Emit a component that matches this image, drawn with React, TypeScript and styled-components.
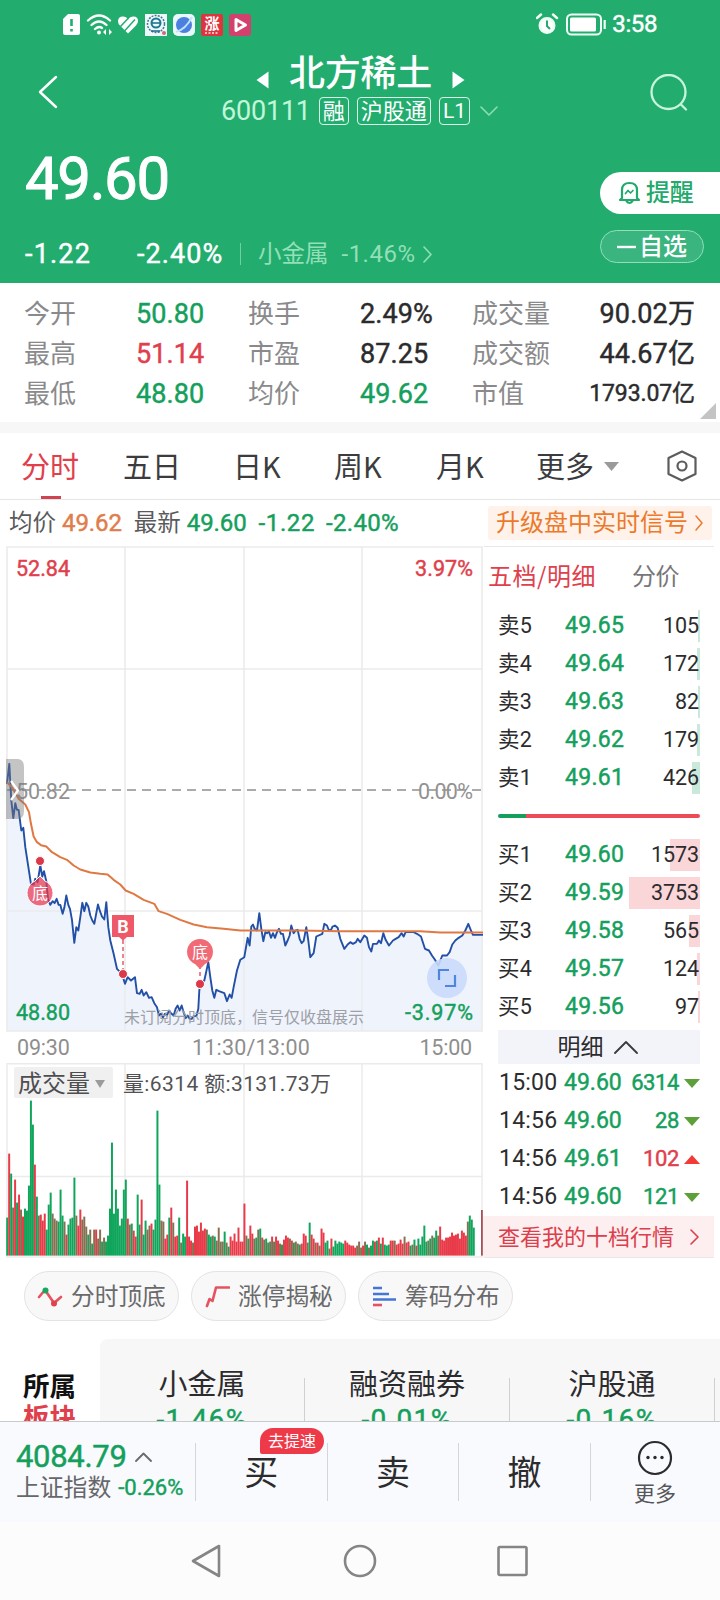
import React from 'react';
import styled, { createGlobalStyle } from 'styled-components';

const GREEN = '#14a05c';
const RED = '#e0404c';
const CJK = "'Noto Sans CJK SC', sans-serif";
const NUM = "Roboto, 'Noto Sans CJK SC', sans-serif";

const Global = createGlobalStyle`
  * { box-sizing: border-box; }
  body { margin: 0; background: #fff; font-family: ${CJK}; color: #2c2c2e; }
  svg { display: block; flex: none; }
`;

const Screen = styled.div`
  width: 720px;
  height: 1600px;
  overflow: hidden;
  display: flex;
  flex-direction: column;
  background: #fff;
`;

const Text = styled.span<{ $s: number; $c?: string; $w?: number; $ls?: number }>`
  font-size: ${p => p.$s}px;
  line-height: 1.2;
  margin-bottom: 3px;
  color: ${p => p.$c ?? 'inherit'};
  font-weight: ${p => p.$w ?? 400};
  letter-spacing: ${p => p.$ls ?? 0}px;
  white-space: nowrap;
`;

/* Figures: regular cut, slightly thickened unless a weight is set. */
const Num = styled(Text)`
  font-family: ${NUM};
  margin-bottom: 0;
  font-weight: ${p => p.$w ?? 400};
  -webkit-text-stroke: ${p => (p.$w ? 0 : 0.45)}px currentColor;
`;

/* ---------- header ---------- */
const Header = styled.header`
  height: 283px;
  background: #22ad6f;
  color: #fff;
  flex: none;
`;
const StatusBar = styled.div`
  height: 49px;
  padding: 0 63px;
  display: flex;
  align-items: center;
  justify-content: space-between;
`;
const StatusGroup = styled.div<{ $gap: number }>`
  display: flex;
  align-items: center;
  gap: ${p => p.$gap}px;
`;
const TitleBar = styled.div`
  height: 83px;
  display: flex;
  justify-content: space-between;
  padding: 0 32px 0 38px;
`;
const SideButton = styled.div`
  width: 38px;
  padding-top: 25px;
`;
const TitleBlock = styled.div`
  display: flex;
  flex-direction: column;
  align-items: center;
  padding-right: 5px;
`;
const NameRow = styled.div`
  display: flex;
  align-items: center;
  height: 46px;
  gap: 20px;
  svg { margin-top: 16px; }
`;
const CodeRow = styled.div`
  display: flex;
  align-items: center;
  height: 32px;
  gap: 8px;
  margin-right: 2px;
  > svg { margin-left: 2px; }
`;
const Tag = styled.span`
  height: 28px;
  padding: 0 3px;
  border: 1.5px solid #d8fbe8;
  border-radius: 4px;
  font-size: 22px;
  line-height: 23px;
`;
const SmallTag = styled(Tag)`
  padding: 0 3px;
  font-family: ${NUM};
  font-size: 21px;
  line-height: 26px;
`;
const QuoteBar = styled.div`
  display: flex;
  justify-content: space-between;
  height: 151px;
  padding-left: 25px;
`;
const QuoteLeft = styled.div`
  display: flex;
  flex-direction: column;
`;
const BigPrice = styled.div`
  font: 400 60px/72px ${NUM};
  -webkit-text-stroke: 1px currentColor;
  letter-spacing: -1.4px;
  margin-top: 11px;
`;
const ChangeRow = styled.div`
  display: flex;
  align-items: center;
  height: 34px;
  margin-top: 22px;
`;
const Change = styled(Num)<{ $width: number }>`
  width: ${p => p.$width}px;
`;
const Divider = styled.i<{ $h: number; $c: string }>`
  width: 1px;
  height: ${p => p.$h}px;
  background: ${p => p.$c};
  flex: none;
`;
const SectorLink = styled.div`
  display: flex;
  align-items: center;
  margin-left: 17px;
  color: #93dfb8;
`;
const QuoteActions = styled.div`
  width: 120px;
  padding-top: 40px;
`;
const RemindButton = styled.div`
  height: 42px;
  border-radius: 21px 0 0 21px;
  background: #fff;
  color: #22a96b;
  display: flex;
  align-items: center;
  gap: 5px;
  padding-left: 18px;
`;
const FavButton = styled.div`
  width: 104px;
  height: 33px;
  margin-top: 16px;
  border: 1px solid #8fe0b7;
  border-radius: 17px;
  background: #3ab57f;
  display: flex;
  align-items: center;
  gap: 3px;
  padding-left: 16px;
`;

/* ---------- stats ---------- */
const Stats = styled.section`
  height: 139px;
  padding: 10px 25px 9px 24px;
  display: grid;
  grid-template-columns: 112px 112px 112px 112px 100px 123px;
  grid-template-rows: repeat(3, 40px);
  align-items: center;
  position: relative;
`;
const StatValue = styled.div<{ $c?: string; $right?: boolean; $small?: boolean }>`
  font: 400 ${p => (p.$small ? 23 : 27)}px/32px ${NUM};
  -webkit-text-stroke: 0.45px currentColor;
  letter-spacing: ${p => (p.$small ? -0.1 : 0.1)}px;
  color: ${p => p.$c ?? '#2b2b2d'};
  text-align: ${p => (p.$right ? 'right' : 'left')};
  white-space: nowrap;
  margin-top: 2px;
`;
const FoldCorner = styled.svg`
  position: absolute;
  right: 4px;
  bottom: 3px;
`;
const Band = styled.div`
  height: 11px;
  background: #f7f7f7;
  flex: none;
`;

/* ---------- period tabs ---------- */
const Tabs = styled.nav`
  height: 67px;
  padding: 0 23px 0 21px;
  border-bottom: 1px solid #e6e6e6;
  display: grid;
  grid-template-columns: 102px 110px 101px 102px 100px 131px 30px;
  align-items: center;
`;
const Tab = styled.div<{ $active?: boolean }>`
  height: 66px;
  display: flex;
  align-items: center;
  gap: 10px;
  font-size: 29px;
  color: ${p => (p.$active ? RED : '#3c3c3e')};
  position: relative;
  padding-bottom: 3px;
  > svg { margin-top: 3px; }
  &::after {
    content: ${p => (p.$active ? "''" : 'none')};
    position: absolute;
    left: 20px;
    bottom: 0;
    width: 20px;
    height: 3px;
    background: #cf4450;
  }
`;

const InfoBar = styled.div`
  height: 46px;
  padding: 0 8px 0 9px;
  display: flex;
  align-items: center;
  justify-content: space-between;
`;
const InfoLeft = styled.div`
  display: flex;
  align-items: center;
`;
const Gap = styled.i<{ $w: number }>`
  width: ${p => p.$w}px;
`;
const SignalButton = styled.div`
  width: 224px;
  height: 34px;
  background: #fef2ea;
  color: #ec7a2c;
  border-radius: 3px;
  display: flex;
  align-items: center;
  gap: 6px;
  padding-left: 8px;
`;

/* ---------- main ---------- */
const Main = styled.section`
  display: flex;
  height: 712px;
  flex: none;
`;
const Charts = styled.div`
  width: 484px;
`;
const Book = styled.aside`
  width: 230px;
  border-top: 1px solid #e8e8e8;
  border-bottom: 1px solid #e8e8e8;
`;
const BookTabs = styled.div`
  height: 60px;
  padding-left: 4px;
  display: flex;
  align-items: center;
  gap: 36px;
`;
const Level = styled.div`
  height: 38px;
  padding: 0 14px 0 14px;
  display: grid;
  grid-template-columns: 67px 64px 71px;
  align-items: center;
`;
const Qty = styled.div<{ $bar: number; $c: string }>`
  height: 32px;
  font: 400 21.5px/32px ${NUM};
  letter-spacing: -0.1px;
  text-align: right;
  padding-right: 1px;
  background: linear-gradient(${p => p.$c}, ${p => p.$c}) right / ${p => p.$bar}px 32px no-repeat;
`;
const Ratio = styled.div`
  display: flex;
  height: 4px;
  margin: 17px 14px 18px;
  border-radius: 2px;
  overflow: hidden;
  background: linear-gradient(90deg, #14a05c 28px, #ee4b59 28px);
`;
const DetailHead = styled.div`
  height: 34px;
  margin: 4px 14px 0;
  background: #f3f4f9;
  display: flex;
  align-items: center;
  justify-content: center;
  gap: 10px;
  padding-right: 3px;
`;
const Trade = styled.div`
  height: 38px;
  padding-left: 15px;
  display: grid;
  grid-template-columns: 65px 59px 56px 21px;
  align-items: center;
  justify-items: start;
  > :nth-child(3) { justify-self: end; }
  > :nth-child(4) { justify-self: end; }
`;
const DepthLink = styled.div`
  height: 41px;
  margin-left: -1px;
  background: #fdeef0;
  color: #dc3f4c;
  display: flex;
  align-items: center;
  justify-content: space-between;
  padding: 0 15px 0 15px;
`;

/* ---------- pills ---------- */
const Pills = styled.div`
  display: flex;
  gap: 12px;
  padding: 13px 24px 18px;
  flex: none;
`;
const Pill = styled.div`
  width: 155px;
  height: 50px;
  border: 1px solid #e3e3e3;
  border-radius: 25px;
  background: #f8f8f8;
  display: flex;
  align-items: center;
  gap: 8px;
  padding: 1px 0 0 12px;
`;

/* ---------- boards ---------- */
const Boards = styled.section`
  height: 82px;
  display: flex;
  overflow: hidden;
  flex: none;
`;
const BoardLabel = styled.div`
  width: 100px;
  padding: 30px 0 0 23px;
  font-weight: 700;
  font-size: 26.5px;
  line-height: 31px;
  color: #111;
  flex: none;
  em { font-style: normal; color: ${RED}; display: block; }
`;
const BoardList = styled.div`
  flex: 1;
  display: flex;
  background: #f7f7f7;
  border-radius: 8px 0 0 0;
`;
const Board = styled.div`
  width: 205px;
  flex: none;
  display: flex;
  flex-direction: column;
  align-items: center;
  padding: 25px 1px 0 0;
  font-size: 29px;
  line-height: 36px;
  background: linear-gradient(#d0d0d0, #d0d0d0) right 39px / 1px 50px no-repeat;
`;
const BoardPct = styled.div`
  font: 400 28px/34px ${NUM};
  -webkit-text-stroke: 0.45px currentColor;
  letter-spacing: 1.4px;
  color: ${GREEN};
  margin-top: 3px;
`;

/* ---------- bottom ---------- */
const TradeBar = styled.footer`
  height: 101px;
  border-top: 1px solid #c9cacc;
  background: #f9fafd;
  display: flex;
  align-items: flex-start;
  padding-top: 21px;
  flex: none;
`;
const IndexBox = styled.div`
  width: 195px;
  padding-left: 16px;
`;
const IndexRow = styled.div<{ $h: number; $gap: number }>`
  display: flex;
  align-items: center;
  gap: ${p => p.$gap}px;
  height: ${p => p.$h}px;
`;
const Action = styled.div`
  width: 131.600px;
  height: 58px;
  border-left: 1px solid #d5d6da;
  display: flex;
  align-items: center;
  justify-content: center;
  font-size: 34px;
  padding-bottom: 3px;
  position: relative;
`;
const Badge = styled.span`
  position: absolute;
  left: 64px;
  top: -15px;
  width: 64px;
  height: 26px;
  border-radius: 13px 13px 13px 2px;
  background: #ee3a48;
  color: #fff;
  font-size: 16px;
  line-height: 24px;
  text-align: center;
`;
const More = styled.div`
  flex: 1;
  height: 58px;
  border-left: 1px solid #d5d6da;
  display: flex;
  flex-direction: column;
  align-items: center;
  gap: 4px;
  padding-right: 1px;
  > svg { margin-top: -3px; }
`;
const NavBar = styled.div`
  flex: 1;
  background: #fcfcfc;
  display: flex;
  justify-content: center;
  align-items: center;
  gap: 120px;
`;

type ChevronProps = { d: string; w: number; h: number; c?: string; s?: number };
const Stroke = ({ d, w, h, c = 'currentColor', s = 1.6 }: ChevronProps) => (
  <svg width={w} height={h} fill="none" stroke={c} strokeWidth={s} strokeLinecap="round" strokeLinejoin="round">
    <path d={d} />
  </svg>
);

/* Intraday price samples, in thirds of a pixel from (0, 750). */
const PRICE_AM = '20,100 27,40 33,150 39,203 45,158 50,178 55,178 63,240 69,232 75,290 92,400 100,402 105,385 112,395 120,345 126,378 131,362 138,392 143,445 150,463 157,452 163,458 169,445 175,463 180,463 187,490 192,472 198,435 204,463 209,475 215,508 222,577 228,530 234,540 240,500 246,457 252,482 258,457 264,468 270,495 276,510 282,520 288,488 293,462 299,482 305,498 312,507 318,455 324,530 330,570 340,610 350,655 360,665 368,680 374,700 382,680 392,690 404,680 410,728 418,730 424,718 430,735 438,725 446,742 454,740 462,758 470,770 476,795 482,790 488,800 494,790 500,795 506,780 512,788 520,795 526,775 532,765 538,780 544,765 550,785 556,803 562,795 568,805 574,805 580,797 588,797 594,775 597,720 600,700 612,690 624,635 630,680 636,720 642,742 648,718 656,722 672,728 680,752 688,732 694,742 700,710 710,660 720,628';
const PRICE_PM = '732,620 742,562 748,585 753,528 758,522 763,535 770,540 777,488 783,535 789,572 795,545 800,548 806,543 812,562 818,548 824,562 830,545 836,535 842,550 848,550 855,585 862,570 868,555 873,525 880,548 886,540 892,538 898,565 904,578 910,572 918,530 924,570 930,620 940,608 948,558 966,550 972,520 980,525 986,540 992,538 997,528 1004,525 1012,532 1020,565 1032,595 1042,582 1050,575 1058,580 1067,575 1072,565 1080,575 1092,555 1100,562 1106,590 1113,603 1118,580 1130,580 1136,570 1142,578 1149,548 1156,568 1166,585 1178,570 1186,565 1195,560 1204,548 1210,558 1216,545 1240,545 1250,550 1262,558 1274,595 1286,600 1295,615 1304,628 1314,645 1326,615 1340,615 1348,605 1356,582 1365,570 1375,562 1386,555 1395,540 1404,520 1412,540 1418,553 1448,553';
const AVERAGE = '20,95 35,110 55,145 75,162 86,185 92,220 100,258 110,275 122,284 138,288 155,305 180,320 200,328 220,345 240,357 270,366 300,370 322,372 340,388 360,402 376,420 400,430 430,448 462,460 475,482 500,490 540,508 580,522 620,530 670,535 720,540 900,540 1020,542 1260,542 1320,546 1448,546';
const toPoints = (s: string) =>
  s.split(' ').map(p => {
    const [x, y] = p.split(',').map(Number);
    return `${(x / 3 + 0.3).toFixed(2)},${(750.5 + y / 3).toFixed(2)}`;
  }).join(' ');
const price = toPoints(`${PRICE_AM} ${PRICE_PM}`);
const average = toPoints(AVERAGE);

/* Per-minute volume: bar height followed by r(ise), g(fall) or m(ixed). */
const VOLUME = '38g 102r 82g 48m 76r 53g 61r 46m 39r 47g 45g 70g 155g 131g 91r 59g 40m 41r 35r 42r 26g 51g 63g 42m 37m 35m 34g 66g 40g 34m 21r 31g 37g 38g 78g 40m 30r 46r 36m 39m 29m 21g 26m 12g 26m 26r 17m 26m 14g 18m 14g 20g 47g 113g 42g 66g 47g 30g 37g 66g 76g 37r 31m 32g 25r 19r 61g 31g 56r 21g 35g 26m 30m 32r 26g 36g 145g 71g 35m 34m 17r 21r 38g 48r 33m 19r 20r 38g 13m 22g 19g 75r 19r 15r 13m 29r 30r 24r 33r 25r 27r 26m 21g 19g 20m 19g 15m 28m 14m 14m 24g 13m 9g 19r 15r 22r 14r 28r 14r 14r 52r 20m 17g 30r 22r 17m 18g 26m 27g 18r 16m 17g 13m 14g 19r 14g 19r 15r 12m 11g 16r 20r 18r 17m 15r 13g 14m 12m 11g 12r 22r 20r 13m 33g 21r 17r 13m 13r 10m 27r 23r 13g 15g 7m 17r 9g 15g 12g 14g 13g 12g 15r 13r 11r 10r 10r 8r 10m 14m 8m 10r 14m 11g 8m 10g 15g 14r 15g 18r 12g 18r 11g 10g 11g 15r 15r 15m 11r 12r 16r 12r 19m 13r 14r 10g 11m 16g 10r 17g 11g 19g 30g 14g 15m 17g 20m 18g 25g 20m 29r 16r 15r 18r 18r 19r 23r 20r 21r 22r 17r 25r 23r 20r 34m 40g 36g 28g'
  .split(' ').map(v => ({ h: parseInt(v, 10), c: v.slice(-1) }));
const VOL_COLORS: Record<string, string> = { r: '#e83a48', g: '#0fa55a', m: '#867052' };

const TrendChart = () => (
  <svg width="484" height="486" viewBox="0 546 484 486" fontFamily={NUM}>
    <polygon points={`${price} 482,1031 7,1031`} fill="#eff3fc" />
    <g stroke="#ebebed" strokeWidth="1.6" fill="none">
      <path d="M7 547H482V1031H7ZM125 547V1031M244 547V1031M362 547V1031M7 669H482M7 911H482" />
    </g>
    <path d="M7 790H482" stroke="#909090" strokeWidth="1.6" strokeDasharray="9 6" />
    <g fontSize="21.5" stroke={RED} strokeWidth=".45">
      <text x="16" y="576" fill={RED} textLength="54">52.84</text>
      <text x="415" y="576" fill={RED} textLength="58">3.97%</text>
    </g>
    <g fontSize="21.5" fill="#929292">
      <text x="16" y="798.500" textLength="54">50.82</text>
      <text x="418" y="798.500" textLength="55">0.00%</text>
    </g>
    <polyline points={price} fill="none" stroke="#2250a6" strokeWidth="1.900" strokeLinejoin="round" />
    <polyline points={average} fill="none" stroke="#df7843" strokeWidth="2" strokeLinejoin="round" />
    <text x="124" y="1023" fontSize="16" fontFamily={CJK} fill="#9da0a6" textLength="240">未订阅分时顶底，信号仅收盘展示</text>
    <g fontSize="21.5" fill={GREEN} stroke={GREEN} strokeWidth=".45">
      <text x="16" y="1020" textLength="54">48.80</text>
      <text x="405" y="1020" textLength="68">-3.97%</text>
    </g>
    <path d="M6 759H17Q24 759 24 767V811Q24 819 17 819H6Z" fill="#777" fillOpacity=".43" />
    <path d="M11 781L18 790.500L11 800" stroke="#fff" strokeWidth="2.200" fill="none" />
    <g stroke="#fff" strokeWidth="1">
      <path d="M35 881L40 876L45 881A13 13 0 1 1 35 881Z" fill="#e8364f" fillOpacity=".72" />
      <circle cx="40" cy="861" r="4.500" fill="#dd3748" />
    </g>
    <path d="M123 940V970M200 965V980" stroke="#e66673" strokeWidth="1.6" strokeDasharray="4 3" />
    <path d="M112 915H134V937H127L123 940.500L119 937H112Z" fill="#ee5869" />
    <path d="M195 964L200 969L205 964A13 13 0 1 0 195 964Z" fill="#f06b76" />
    <g fill="#dd3748" stroke="#fff" strokeWidth="1">
      <circle cx="123" cy="974" r="4.500" />
      <circle cx="200" cy="984" r="4.500" />
    </g>
    <g fill="#fff" textAnchor="middle">
      <text x="40" y="899" fontSize="16" fontFamily={CJK}>底</text>
      <text x="200" y="958" fontSize="16" fontFamily={CJK}>底</text>
      <text x="123" y="932.500" fontSize="18" fontWeight="700">B</text>
    </g>
    <circle cx="447" cy="978" r="20" fill="#c9dafb" fillOpacity=".9" />
    <path d="M439 980V970H449M455 975V986H445" stroke="#4e86dd" strokeWidth="2.200" fill="none" />
  </svg>
);

const TimeAxis = styled.div`
  height: 31px;
  padding: 1px 12px 0 17px;
  display: flex;
  align-items: center;
  justify-content: space-between;
  font: 400 21.5px/28px ${NUM};
  letter-spacing: -0.2px;
  color: #8e8e8e;
`;
const NoonLabel = styled.span`
  margin-left: 13px;
  letter-spacing: 0.2px;
`;

const VolumeChart = () => (
  <svg width="484" height="195" viewBox="0 1063 484 195">
    <path d="M7 1063.800H482V1257H7ZM125 1063V1257M244 1063V1257M362 1063V1257M7 1176.500H482" stroke="#ebebed" strokeWidth="1.500" fill="none" />
    <rect x="14" y="1067" width="99" height="31" rx="2" fill="#f0f0f0" />
    <text x="18" y="1091.500" fontSize="24" fontFamily={CJK} fill="#4e4e50">成交量</text>
    <path d="M95 1080H105L100 1088Z" fill="#9b9b9b" />
    <text x="123" y="1091" fontSize="21" fontFamily={NUM} fill="#525254" textLength="208">量:6314 额:3131.73万</text>
    {VOLUME.map((v, i) => (
      <rect key={i} x={6.2 + i * 1.977} y={1255.6 - v.h} width="1.977" height={v.h} fill={VOL_COLORS[v.c]} />
    ))}
    <rect x="481" y="1210" width="1.800" height="45.600" fill="#a94f58" />
  </svg>
);

const asks: [string, string, string, number][] = [
  ['卖5', '49.65', '105', 2], ['卖4', '49.64', '172', 3], ['卖3', '49.63', '82', 2],
  ['卖2', '49.62', '179', 3], ['卖1', '49.61', '426', 8],
];
const bids: [string, string, string, number][] = [
  ['买1', '49.60', '1573', 30], ['买2', '49.59', '3753', 71], ['买3', '49.58', '565', 11],
  ['买4', '49.57', '124', 3], ['买5', '49.56', '97', 2],
];
const trades: [string, string, string, boolean][] = [
  ['15:00', '49.60', '6314', false], ['14:56', '49.60', '28', false],
  ['14:56', '49.61', '102', true], ['14:56', '49.60', '121', false],
];

const Levels = ({ rows, color }: { rows: typeof asks; color: string }) => (
  <>
    {rows.map(([name, p, q, bar]) => (
      <Level key={name}>
        <Num $s={21.5} $w={400} $ls={0.2}>{name}</Num>
        <Num $s={23} $c={GREEN} $ls={0.3}>{p}</Num>
        <Qty $bar={bar} $c={color}>{q}</Qty>
      </Level>
    ))}
  </>
);

const StatusIcons = () => (
  <svg width="190" height="24" viewBox="63 12 190 24">
    <path d="M68 13H78Q80 13 80 15V32Q80 34 78 34H65Q63 34 63 32V18Z" fill="#fff" />
    <path d="M71.500 18V25M71.500 28V30.500" stroke="#22ad6f" strokeWidth="2.600" />
    <g fill="none" stroke="#fff" strokeWidth="2.300" strokeLinecap="round">
      <path d="M88 19.500Q99 9.500 110 19.500M91.500 24Q99 17 106.500 24M95 28Q99 24.500 102 27" />
    </g>
    <circle cx="99" cy="31.500" r="2" fill="#fff" />
    <path d="M106 28L103 31L106 34ZM109 28L112 31L109 34Z" fill="#fff" />
    <path d="M118 20.500Q118 15.500 123 15.500Q126.500 15.500 128 18.500Q130 15.500 133.500 15.500Q138 15.500 138 20Q138 22.500 136 24.500L128 32.500L120 24.500Q118 22.500 118 20.500Z" fill="#fff" />
    <path d="M120.500 25.500L128.500 17M124.500 30L135 18.500" stroke="#22ad6f" strokeWidth="1.500" />
    <rect x="145" y="13" width="22" height="22" fill="#edf9fb" />
    <circle cx="156" cy="23" r="8.500" fill="none" stroke="#47718e" strokeWidth="1.500" strokeDasharray="2 1.200" />
    <circle cx="156" cy="22" r="4.500" fill="none" stroke="#1c7b94" strokeWidth="2" />
    <path d="M152 22H160M151 30H160" stroke="#1c6a92" strokeWidth="1.500" />
    <circle cx="164" cy="32" r="2" fill="#cf6a78" />
    <rect x="173" y="13" width="22" height="22" rx="5" fill="#eaf8fc" />
    <circle cx="184" cy="24" r="8" fill="#4b7fe0" />
    <path d="M176 31Q186 28 192 16" stroke="#bfe3fb" strokeWidth="1.800" fill="none" />
    <rect x="201" y="13" width="22" height="22" rx="2" fill="#dd3440" />
    <text x="212" y="28" fontSize="15" fontWeight="700" textAnchor="middle" fill="#fff" fontFamily={CJK}>涨</text>
    <path d="M205 32H219" stroke="#ffe3e3" strokeWidth="1.500" strokeDasharray="2 1.500" />
    <rect x="229" y="13" width="22" height="22" rx="3" fill="#d3406e" />
    <path d="M236 18.500L245.500 24L236 29.500Z" fill="none" stroke="#fff" strokeWidth="3" strokeLinejoin="round" />
  </svg>
);

const Battery = () => (
  <svg width="70" height="24" viewBox="536 12 70 24" fill="none" stroke="#effff6">
    <circle cx="547" cy="25.500" r="7" fill="#fff" strokeWidth="3" />
    <path d="M547 20.500V26L550 29" stroke="#22ad6f" strokeWidth="2" />
    <path d="M537 18L541 14.500M557 18L553 14.500" strokeWidth="2.500" strokeLinecap="round" />
    <rect x="567" y="14.500" width="34" height="20" rx="4.500" strokeWidth="2" />
    <rect x="570" y="17.500" width="26" height="14" rx="1.500" fill="#fff" stroke="none" />
    <path d="M604.700 20V29" strokeWidth="2.200" />
  </svg>
);

export default function App() {
  return (
    <Screen>
      <Global />
      <Header>
        <StatusBar>
          <StatusIcons />
          <StatusGroup $gap={6}>
            <Battery />
            <Num $s={24} $ls={-0.4}>3:58</Num>
          </StatusGroup>
        </StatusBar>
        <TitleBar>
          <SideButton><Stroke w={20} h={36} d="M18 3L2 18L18 33" s={2.4} /></SideButton>
          <TitleBlock>
            <NameRow>
              <svg width="13" height="18"><path d="M12.500 0.500V17.500L0.500 9Z" fill="#fff" /></svg>
              <Text $s={36} $w={500} $ls={-0.3}>北方稀土</Text>
              <svg width="13" height="18"><path d="M0.500 0.500V17.500L12.500 9Z" fill="#fff" /></svg>
            </NameRow>
            <CodeRow>
              <Num $s={27} $w={400} $c="#c0f7d8" $ls={-0.2}>600111</Num>
              <Tag>融</Tag><Tag>沪股通</Tag><SmallTag>L1</SmallTag>
              <Stroke w={18} h={12} d="M1 2L9 10L17 2" c="#8be0b2" />
            </CodeRow>
          </TitleBlock>
          <SideButton>
            <svg width="38" height="38" fill="none" stroke="#c9f3dc" strokeWidth="2.300" strokeLinecap="round">
              <circle cx="18.500" cy="18" r="17" />
              <path d="M31 30.500L36 35.500" />
            </svg>
          </SideButton>
        </TitleBar>
        <QuoteBar>
          <QuoteLeft>
            <BigPrice>49.60</BigPrice>
            <ChangeRow>
              <Change $s={27} $ls={1.2} $width={112}>-1.22</Change>
              <Change $s={27} $ls={1.1} $width={103}>-2.40%</Change>
              <Divider $h={22} $c="#6fd09f" />
              <SectorLink>
                <Text $s={23.5}>小金属</Text>
                <Gap $w={13} />
                <Num $s={24} $w={400} $ls={0.5}>-1.46%</Num>
                <Gap $w={6} />
                <Stroke w={11} h={17} d="M2 1L9 8.500L2 16" />
              </SectorLink>
            </ChangeRow>
          </QuoteLeft>
          <QuoteActions>
            <RemindButton>
              <svg width="23" height="24" fill="none" stroke="#22a96b" strokeWidth="2.200" strokeLinejoin="round" strokeLinecap="round">
                <path d="M4 17V9Q4 2 11.500 2Q19 2 19 9V17L21 19H2ZM8.500 20Q11.500 24 14.500 20" />
                <path d="M7.500 12.500L10 9.500L12.500 12L15 9.500" strokeWidth="1.700" />
              </svg>
              <Text $s={24} $w={500} $ls={-0.3}>提醒</Text>
            </RemindButton>
            <FavButton>
              <svg width="19" height="4"><path d="M0 2H19" stroke="#fff" strokeWidth="2.400" /></svg>
              <Text $s={24} $w={500}>自选</Text>
            </FavButton>
          </QuoteActions>
        </QuoteBar>
      </Header>

      <Stats>
        <Text $s={26} $c="#8a8a8c">今开</Text><StatValue $c={GREEN}>50.80</StatValue>
        <Text $s={26} $c="#8a8a8c">换手</Text><StatValue>2.49%</StatValue>
        <Text $s={26} $c="#8a8a8c">成交量</Text><StatValue $right>90.02万</StatValue>
        <Text $s={26} $c="#8a8a8c">最高</Text><StatValue $c={RED}>51.14</StatValue>
        <Text $s={26} $c="#8a8a8c">市盈</Text><StatValue>87.25</StatValue>
        <Text $s={26} $c="#8a8a8c">成交额</Text><StatValue $right>44.67亿</StatValue>
        <Text $s={26} $c="#8a8a8c">最低</Text><StatValue $c={GREEN}>48.80</StatValue>
        <Text $s={26} $c="#8a8a8c">均价</Text><StatValue $c={GREEN}>49.62</StatValue>
        <Text $s={26} $c="#8a8a8c">市值</Text><StatValue $right $small>1793.07亿</StatValue>
        <FoldCorner width="16" height="16"><path d="M16 0V16H0Z" fill="#c4c4c4" /></FoldCorner>
      </Stats>
      <Band />

      <Tabs>
        <Tab $active>分时</Tab>
        <Tab>五日</Tab>
        <Tab>日K</Tab>
        <Tab>周K</Tab>
        <Tab>月K</Tab>
        <Tab>更多<svg width="15" height="9"><path d="M0 0H15L7.500 9Z" fill="#9a9a9a" /></svg></Tab>
        <svg width="30" height="32" fill="none" stroke="#5c5c5e" strokeWidth="2.200" strokeLinejoin="round">
          <path d="M15 1.500L28.500 8V24L15 30.500L1.500 24V8Z" />
          <circle cx="15" cy="16" r="4.500" />
        </svg>
      </Tabs>

      <InfoBar>
        <InfoLeft>
          <Text $s={23.5} $c="#5a5a5c">均价</Text><Gap $w={6} />
          <Num $s={24} $c="#df7d4c" $ls={-0.1}>49.62</Num><Gap $w={12} />
          <Text $s={23.5} $c="#5a5a5c">最新</Text><Gap $w={6} />
          <Num $s={24} $c={GREEN} $ls={-0.1}>49.60</Num><Gap $w={12} />
          <Num $s={24} $c={GREEN} $ls={0.6}>-1.22</Num><Gap $w={11} />
          <Num $s={24} $c={GREEN} $ls={0.3}>-2.40%</Num>
        </InfoLeft>
        <SignalButton>
          <Text $s={24}>升级盘中实时信号</Text>
          <Stroke w={10} h={18} d="M2 2L8 9L2 16" s={1.5} />
        </SignalButton>
      </InfoBar>

      <Main>
        <Charts>
          <TrendChart />
          <TimeAxis><span>09:30</span><NoonLabel>11:30/13:00</NoonLabel><span>15:00</span></TimeAxis>
          <VolumeChart />
        </Charts>
        <Book>
          <BookTabs>
            <Text $s={24} $c={RED} $ls={0.5}>五档/明细</Text>
            <Text $s={24} $c="#77777a" $ls={-0.3}>分价</Text>
          </BookTabs>
          <Levels rows={asks} color="#c9e9da" />
          <Ratio />
          <Levels rows={bids} color="#fbd6d9" />
          <DetailHead>
            <Text $s={23}>明细</Text>
            <Stroke w={24} h={14} d="M1 13L12 2L23 13" c="#3a3a3c" s={1.8} />
          </DetailHead>
          {trades.map(([t, p, q, up], i) => (
            <Trade key={i}>
              <Num $s={23} $w={400} $ls={0.2}>{t}</Num>
              <Num $s={23} $c={GREEN}>{p}</Num>
              <Num $s={22} $c={up ? RED : GREEN} $ls={-0.4}>{q}</Num>
              <svg width="16" height="9">
                <path d={up ? 'M0 9H16L8 0Z' : 'M0 0H16L8 9Z'} fill={up ? '#f23a38' : '#5d9f38'} />
              </svg>
            </Trade>
          ))}
          <DepthLink>
            <Text $s={22}>查看我的十档行情</Text>
            <Stroke w={9} h={16} d="M1 1L8 8L1 15" />
          </DepthLink>
        </Book>
      </Main>

      <Pills>
        <Pill>
          <svg width="26" height="24" fill="none" stroke="#e5535e" strokeWidth="2.600" strokeLinecap="round">
            <path d="M2 12L8 5" /><path d="M8 5L17 18L24 12" />
            <circle cx="8.500" cy="5.500" r="3" fill="#17a860" stroke="none" />
            <circle cx="17" cy="18.500" r="3" fill="#e04350" stroke="none" />
          </svg>
          <Text $s={23.7} $c="#6a6a6c">分时顶底</Text>
        </Pill>
        <Pill>
          <svg width="26" height="24" fill="none" stroke="#e5535e" strokeWidth="2.600" strokeLinecap="round" strokeLinejoin="round">
            <path d="M3 21L5.500 14L8.500 16L12 2.500H25" />
          </svg>
          <Text $s={23.7} $c="#6a6a6c">涨停揭秘</Text>
        </Pill>
        <Pill>
          <svg width="26" height="24" fill="none" stroke="#4476d6" strokeWidth="2.600">
            <path d="M2 3H11M2 9H18M2 14.500H25" /><path d="M2 20H11" stroke="#e5535e" />
          </svg>
          <Text $s={23.7} $c="#6a6a6c">筹码分布</Text>
        </Pill>
      </Pills>

      <Boards>
        <BoardLabel>所属<em>板块</em></BoardLabel>
        <BoardList>
          <Board>小金属<BoardPct>-1.46%</BoardPct></Board>
          <Board>融资融券<BoardPct>-0.01%</BoardPct></Board>
          <Board>沪股通<BoardPct>-0.16%</BoardPct></Board>
        </BoardList>
      </Boards>

      <TradeBar>
        <IndexBox>
          <IndexRow $h={27} $gap={8}>
            <Num $s={31} $c={GREEN} $ls={-0.3}>4084.79</Num>
            <Stroke w={17} h={10} d="M1 9L8.500 1.500L16 9" c="#6a6a6c" s={1.8} />
          </IndexRow>
          <IndexRow $h={36} $gap={7}>
            <Text $s={23.8} $c="#66676a">上证指数</Text>
            <Num $s={22} $c={GREEN}>-0.26%</Num>
          </IndexRow>
        </IndexBox>
        <Action>买<Badge>去提速</Badge></Action>
        <Action>卖</Action>
        <Action>撤</Action>
        <More>
          <svg width="36" height="36">
            <circle cx="18" cy="18" r="16" fill="none" stroke="#2c2c2e" strokeWidth="2.200" />
            <g fill="#2c2c2e"><circle cx="11" cy="17.500" r="1.700" /><circle cx="18" cy="17.500" r="1.700" /><circle cx="25" cy="17.500" r="1.700" /></g>
          </svg>
          <Text $s={21} $c="#55565a">更多</Text>
        </More>
      </TradeBar>

      <NavBar>
        <svg width="32" height="34" fill="none" stroke="#858585" strokeWidth="2.600" strokeLinejoin="round">
          <path d="M28 2V32L2 17Z" />
        </svg>
        <svg width="34" height="34" fill="none" stroke="#858585" strokeWidth="2.600"><circle cx="17" cy="17" r="15" /></svg>
        <svg width="32" height="34" fill="none" stroke="#858585" strokeWidth="2.600"><rect x="1.500" y="3" width="28" height="28" rx="1.500" /></svg>
      </NavBar>
    </Screen>
  );
}
